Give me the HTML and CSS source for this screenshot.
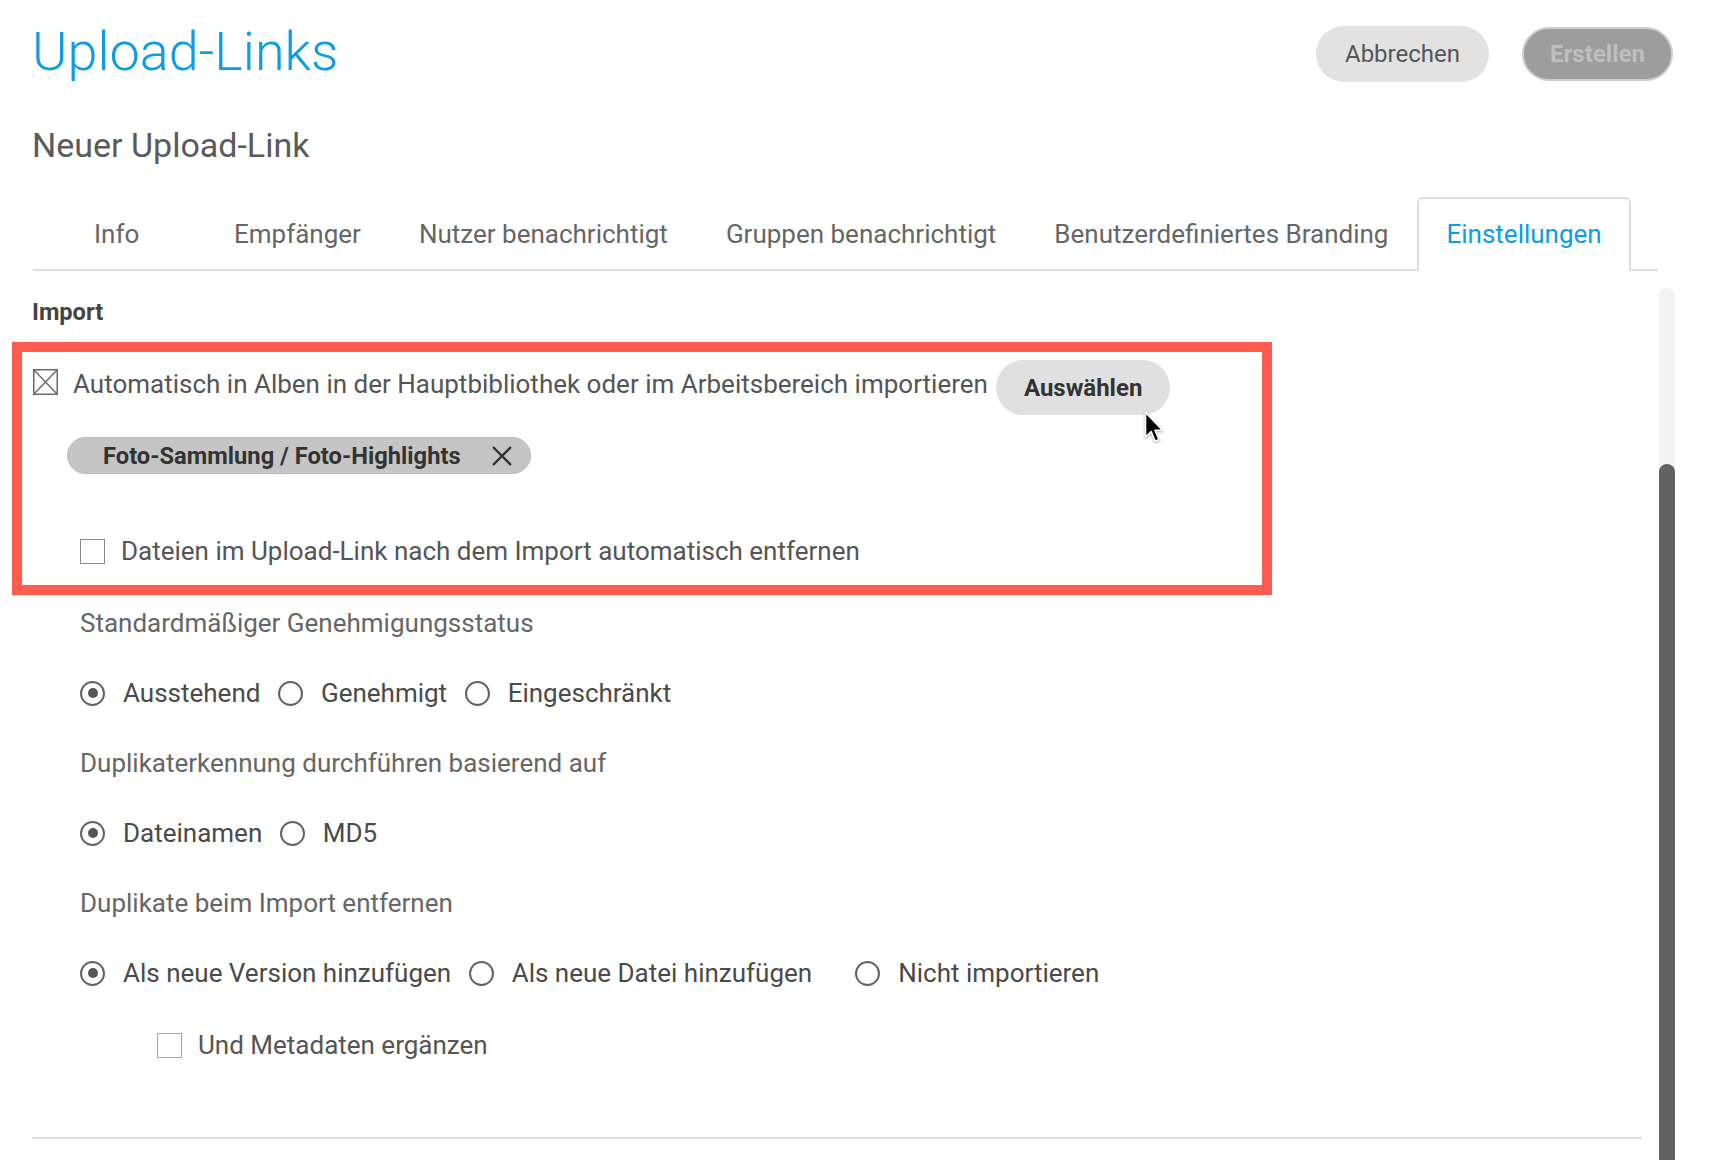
FILE: index.html
```html
<!DOCTYPE html>
<html lang="de">
<head>
<meta charset="utf-8">
<title>Upload-Links</title>
<link rel="stylesheet" href="styles.css">
</head>
<body>
<div class="page">
  <header class="top">
    <h1 class="title">Upload-Links</h1>
    <div class="actions">
      <button class="btn btn-cancel">Abbrechen</button>
      <button class="btn btn-create" disabled>Erstellen</button>
    </div>
  </header>
  <h2 class="subtitle">Neuer Upload-Link</h2>
  <div class="body">
    <div class="main">
      <nav class="tabs">
        <span class="tab tab-first">Info</span>
        <span class="tab">Empfänger</span>
        <span class="tab">Nutzer benachrichtigt</span>
        <span class="tab">Gruppen benachrichtigt</span>
        <span class="tab">Benutzerdefiniertes Branding</span>
        <span class="tab active">Einstellungen</span>
      </nav>
      <section class="content">
        <div class="section-title">Import</div>
        <div class="highlight">
          <div class="import-row">
            <svg class="cb-x" width="25" height="26" viewBox="0 0 25 26">
              <rect x="0.75" y="0.75" width="23.5" height="24.5" fill="none" stroke="#6a6a6a" stroke-width="1.5"/>
              <path d="M1 1 L24 25 M24 1 L1 25" stroke="#6a6a6a" stroke-width="1.4" fill="none"/>
            </svg>
            <span class="import-text">Automatisch in Alben in der Hauptbibliothek oder im Arbeitsbereich importieren</span>
            <button class="btn-select">Auswählen
              <svg class="cursor" width="22" height="34" viewBox="0 0 22 34">
                <path d="M1.5 1.5 V26 L7.2 20.6 L11.2 30.2 L15 28.6 L11 19.2 H18.6 Z" fill="#000" stroke="#fff" stroke-width="1.6" stroke-linejoin="round"/>
              </svg>
            </button>
          </div>
          <div class="chip">
            <span>Foto-Sammlung / Foto-Highlights</span>
            <svg class="chip-x" width="22" height="20" viewBox="0 0 22 20">
              <path d="M2 1 L20 19 M20 1 L2 19" stroke="#333" stroke-width="2.4" fill="none"/>
            </svg>
          </div>
          <div class="check-row">
            <span class="checkbox"></span>
            <span>Dateien im Upload-Link nach dem Import automatisch entfernen</span>
          </div>
        </div>

        <div class="settings">
          <div class="field-label first">Standardmäßiger Genehmigungsstatus</div>
          <div class="radio-row">
            <span class="radio-item"><span class="radio checked"></span>Ausstehend</span>
            <span class="radio-item"><span class="radio"></span>Genehmigt</span>
            <span class="radio-item"><span class="radio"></span>Eingeschränkt</span>
          </div>

          <div class="field-label">Duplikaterkennung durchführen basierend auf</div>
          <div class="radio-row">
            <span class="radio-item"><span class="radio checked"></span>Dateinamen</span>
            <span class="radio-item"><span class="radio"></span>MD5</span>
          </div>

          <div class="field-label">Duplikate beim Import entfernen</div>
          <div class="radio-row wide">
            <span class="radio-item"><span class="radio checked"></span>Als neue Version hinzufügen</span>
            <span class="radio-item"><span class="radio"></span>Als neue Datei hinzufügen</span>
            <span class="radio-item"><span class="radio"></span>Nicht importieren</span>
          </div>

          <div class="check-row sub">
            <span class="checkbox light"></span>
            <span>Und Metadaten ergänzen</span>
          </div>
        </div>
        <div class="divider"></div>
      </section>
    </div>
    <div class="scrollbar"><div class="thumb"></div></div>
  </div>
</div>
</body>
</html>
```

FILE: styles.css
```css
html, body {
  margin: 0;
  padding: 0;
  overflow: hidden;
  background: #fff;
}
body {
  font-family: Roboto, "Liberation Sans", sans-serif;
  color: #555;
}
.page {
  padding: 0 45px 0 32px;
}
.top {
  display: flex;
  justify-content: space-between;
  align-items: flex-start;
}
.title {
  margin: 20px 0 0 0;
  font-size: 54px;
  line-height: 64px;
  font-weight: 300;
  color: #0c9de6;
}
.actions {
  display: flex;
  margin-top: 26px;
  margin-right: 2px;
  gap: 33px;
}
.btn {
  font-family: Roboto, "Liberation Sans", sans-serif;
  font-size: 24px;
  border-radius: 28px;
  border: none;
  padding: 0;
}
.btn-cancel {
  width: 173px;
  height: 56px;
  background: #e2e2e2;
  color: #555;
}
.btn-create {
  width: 151px;
  height: 54px;
  margin-top: 1px;
  background: #9d9d9d;
  border: 2px solid #cdcdcd;
  color: #bfbfbf;
  font-weight: 700;
}
.subtitle {
  margin: 41px 0 0 0;
  font-size: 34px;
  line-height: 40px;
  font-weight: 400;
  color: #5a5a5a;
}
.body {
  display: flex;
  margin-top: 32px;
}
.main {
  flex: 1;
  min-width: 0;
}
.tabs {
  display: flex;
  margin: 0 1px 0 1px;
  border-bottom: 2px solid #dedede;
}
.tab {
  box-sizing: border-box;
  padding: 17px 27px;
  border: 2px solid transparent;
  border-bottom: none;
  font-size: 26px;
  line-height: 36px;
  color: #666;
  text-align: center;
  white-space: nowrap;
}
.tab-first {
  min-width: 172px;
  text-align: left;
  padding-left: 59px;
}
.tab.active {
  color: #0c9de6;
  border-color: #dedede;
  border-radius: 6px 6px 0 0;
  background: #fff;
  margin-bottom: -2px;
  padding-bottom: 19px;
}
.content {
  padding-top: 27px;
  padding-bottom: 60px;
}
.section-title {
  font-size: 23.6px;
  line-height: 28px;
  font-weight: 700;
  color: #444;
}
.highlight {
  box-sizing: border-box;
  width: 1260px;
  margin: 16px 0 0 -20px;
  border: 10px solid #ff5b4f;
  padding: 8px 0 16px 11px;
}
.import-row {
  display: flex;
  align-items: flex-start;
  height: 55px;
}
.cb-x {
  display: block;
  margin-top: 9px;
  flex: none;
}
.import-text {
  margin: 6px 0 0 15px;
  font-size: 26px;
  line-height: 36px;
  color: #555;
  white-space: nowrap;
}
.btn-select {
  position: relative;
  margin-left: 8px;
  height: 55px;
  padding: 0 28px;
  border: none;
  border-radius: 28px;
  background: #e0e0e0;
  font-family: Roboto, "Liberation Sans", sans-serif;
  font-size: 24px;
  font-weight: 700;
  color: #333;
}
.cursor {
  position: absolute;
  left: 148px;
  top: 51px;
  filter: drop-shadow(0 1px 1px rgba(0,0,0,0.35));
}
.chip {
  display: inline-flex;
  align-items: center;
  box-sizing: border-box;
  height: 37px;
  margin: 22px 0 0 34px;
  padding: 0 17px 0 35px;
  border: 1px solid #b9b9b9;
  border-radius: 19px;
  background: #c5c5c5;
  font-size: 23.7px;
  font-weight: 700;
  color: #333;
}
.chip-x {
  display: block;
  margin-left: 30px;
}
.check-row {
  display: flex;
  align-items: center;
  gap: 16px;
  margin: 59px 0 0 47px;
  font-size: 26px;
  line-height: 36px;
  color: #555;
}
.checkbox {
  box-sizing: border-box;
  width: 25px;
  height: 25px;
  border: 1.5px solid #8a8a8a;
  flex: none;
}
.checkbox.light {
  border-color: #a5a5a5;
}
.settings {
  margin-left: 48px;
}
.field-label {
  margin-top: 34px;
  font-size: 26px;
  line-height: 36px;
  color: #666;
}
.field-label.first {
  margin-top: 10px;
}
.radio-row {
  display: flex;
  align-items: center;
  margin-top: 34px;
  font-size: 26px;
  line-height: 36px;
  color: #4a4a4a;
}
.radio-item {
  display: flex;
  align-items: center;
  gap: 18px;
  margin-right: 17.5px;
  white-space: nowrap;
}
.radio-row.wide .radio-item {
  min-width: 369px;
}
.radio {
  box-sizing: border-box;
  position: relative;
  width: 25px;
  height: 25px;
  border: 2.5px solid #636363;
  border-radius: 50%;
  flex: none;
}
.radio.checked::after {
  content: "";
  position: absolute;
  left: 50%;
  top: 50%;
  width: 10px;
  height: 10px;
  margin: -5px 0 0 -5px;
  border-radius: 50%;
  background: #555;
}
.check-row.sub {
  margin: 36px 0 0 77px;
}
.divider {
  height: 2px;
  margin: 74px 17px 0 0;
  background: #dedede;
}
.scrollbar {
  width: 16px;
  height: 900px;
  margin-top: 91px;
  background: #f3f3f3;
  border-radius: 8px 8px 0 0;
  flex: none;
}
.thumb {
  height: 724px;
  margin-top: 176px;
  background: #616161;
  border-radius: 8px 8px 0 0;
}
```
